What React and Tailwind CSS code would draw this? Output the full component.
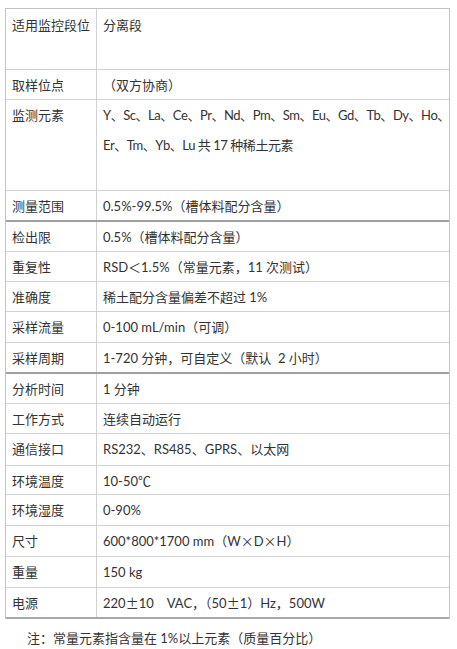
import React from 'react';

const rows = [
  { label: '适用监控段位', value: ['分离段'], h: 'h-[61px]', pt: 'pt-[1px]' },
  { label: '取样位点', value: ['（双方协商）'], h: 'h-[30px]' },
  {
    label: '监测元素',
    value: ['Y、Sc、La、Ce、Pr、Nd、Pm、Sm、Eu、Gd、Tb、Dy、Ho、', 'Er、Tm、Yb、Lu 共 17 种稀土元素'],
    h: 'h-[91px]',
    tight: true,
  },
  { label: '测量范围', value: ['0.5%-99.5%（槽体料配分含量）'], h: 'h-[31px]', thick: true },
  { label: '检出限', value: ['0.5%（槽体料配分含量）'], h: 'h-[30px]' },
  { label: '重复性', value: ['RSD＜1.5%（常量元素，11 次测试）'], h: 'h-[30px]' },
  { label: '准确度', value: ['稀土配分含量偏差不超过 1%'], h: 'h-[30px]' },
  { label: '采样流量', value: ['0-100 mL/min（可调）'], h: 'h-[31px]' },
  { label: '采样周期', value: ['1-720 分钟，可自定义（默认  2 小时）'], h: 'h-[31px]', thick: true },
  { label: '分析时间', value: ['1 分钟'], h: 'h-[30px]' },
  { label: '工作方式', value: ['连续自动运行'], h: 'h-[30px]' },
  { label: '通信接口', value: ['RS232、RS485、GPRS、以太网'], h: 'h-[32px]' },
  { label: '环境温度', value: ['10-50℃'], h: 'h-[29px]' },
  { label: '环境湿度', value: ['0-90%'], h: 'h-[31px]' },
  { label: '尺寸', value: ['600*800*1700 mm（W×D×H）'], h: 'h-[31px]' },
  { label: '重量', value: ['150 kg'], h: 'h-[31px]' },
  { label: '电源', value: ['220±10　VAC，（50±1）Hz，500W'], h: 'h-[31px]', last: true },
];

// ±, × and ℃ come out fullwidth in the original, so set them in the CJK face
const renderLine = (line) =>
  line.split(/([±×℃])/).map((part, i) =>
    part === '±' || part === '×' || part === '℃' ? (
      <span key={i} className="font-['Noto_Sans_CJK_SC',sans-serif]">{part}</span>
    ) : (
      part
    ),
  );

export default function App() {
  return (
    <div className="min-h-[649px] bg-white pt-[8px] text-[13px] text-[#333] font-['Lato','Noto_Sans_CJK_SC',sans-serif]">
      <div className="ml-[5px] w-[445px] border-x border-t border-[#c4c4c4]">
        {rows.map((row) => (
          <div
            key={row.label}
            className={`flex ${row.h} ${row.last ? 'border-b-2 border-[#a8a8a8]' : row.thick ? 'border-b-2 border-[#a0a0a0]' : 'border-b border-[#d2d2d2]'}`}
          >
            <div className={`w-[91px] shrink-0 border-r border-[#d2d2d2] pl-[6px] leading-[30px] ${row.pt || ''}`}>{row.label}</div>
            <div className={`min-w-0 pl-[6px] leading-[30px] ${row.pt || ''} ${row.tight ? 'tracking-[-0.45px]' : ''}`}>
              {row.value.map((line) => (
                <div key={line} className="whitespace-pre">{renderLine(line)}</div>
              ))}
            </div>
          </div>
        ))}
      </div>
      <p className="mt-[9px] pl-[27px] leading-[20px]">注：常量元素指含量在 1%以上元素（质量百分比）</p>
    </div>
  );
}
